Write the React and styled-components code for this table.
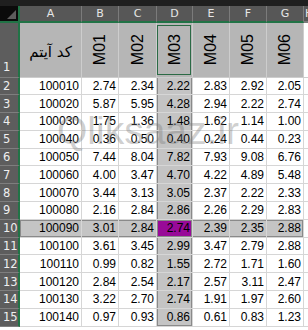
import React from "react";
import styled, { createGlobalStyle } from "styled-components";

const Global = createGlobalStyle`
  html, body { margin: 0; padding: 0; background: #ffffff; overflow: hidden; }
  body { width: 308px; height: 330px; font-family: "Liberation Sans", Arial, sans-serif; }
`;

const COLS = ["A", "B", "C", "D", "E", "F", "G", "H"];
const HEAD = ["کد آیتم", "M01", "M02", "M03", "M04", "M05", "M06"];
const DATA = [
  ["100010", "2.74", "2.34", "2.22", "2.83", "2.92", "2.05"],
  ["100020", "5.87", "5.95", "4.28", "2.94", "2.22", "2.74"],
  ["100030", "1.75", "1.36", "1.48", "1.62", "1.14", "1.00"],
  ["100040", "0.36", "0.50", "0.40", "0.24", "0.44", "0.23"],
  ["100050", "7.44", "8.04", "7.82", "7.93", "9.08", "6.76"],
  ["100060", "4.00", "3.47", "4.70", "4.22", "4.89", "5.48"],
  ["100070", "3.44", "3.13", "3.05", "2.37", "2.22", "2.33"],
  ["100080", "2.16", "2.84", "2.86", "2.26", "2.29", "2.83"],
  ["100090", "3.01", "2.84", "2.74", "2.39", "2.35", "2.88"],
  ["100100", "3.61", "3.45", "2.99", "3.47", "2.79", "2.88"],
  ["100110", "0.99", "0.82", "1.55", "2.72", "1.71", "1.60"],
  ["100120", "2.84", "2.54", "2.17", "2.57", "3.11", "2.47"],
  ["100130", "3.22", "2.70", "2.74", "1.91", "1.97", "2.60"],
  ["100140", "0.97", "0.93", "0.86", "0.61", "0.83", "1.23"],
];

const GREEN = "#217346";
const OUTLINE = "#8a8a8a";

const Window = styled.div`
  position: relative;
  width: 308px;
  height: 330px;
  overflow: hidden;
  background: #ffffff;
`;

const TopStrip = styled.div`
  height: 6px;
  background: #1f1f1f;
`;

const Sheet = styled.div`
  display: grid;
  grid-template-columns: 20px 62px 37px 38px 36px 37px 37px 37px 37px;
  grid-template-rows: 17px 54.5px repeat(15, 17.8px);
`;

const Corner = styled.div`
  background: #0b0b0b;
  border-bottom: 2px solid ${GREEN};
  border-right: 2px solid ${GREEN};
  box-sizing: border-box;
  display: flex;
  align-items: flex-end;
  justify-content: flex-end;
  padding: 0 2px 2px 0;
`;

const ColHead = styled.div`
  box-sizing: border-box;
  background: #575757;
  color: #e6e6e6;
  font-family: "DejaVu Sans", "Liberation Sans", sans-serif;
  font-size: 11px;
  display: flex;
  align-items: center;
  justify-content: ${(p) => (p.$edge ? "flex-start" : "center")};
  padding-left: ${(p) => (p.$edge ? "1px" : "0")};
  border-right: 1px solid #7b7b7b;
  border-bottom: 2px solid ${(p) => (p.$sel ? GREEN : "#7b7b7b")};
  overflow: hidden;
`;

const RowHead = styled.div`
  box-sizing: border-box;
  background: #5d5d5d;
  color: #efefef;
  font-family: "DejaVu Sans", "Liberation Sans", sans-serif;
  font-size: 11.5px;
  display: flex;
  align-items: ${(p) => (p.$tall ? "flex-end" : "center")};
  padding: ${(p) => (p.$tall ? "0 0 3px 3px" : "0 0 0 3px")};
  border-right: 2px solid ${GREEN};
  border-bottom: 1px solid #7e7e7e;
`;

const Cell = styled.div`
  box-sizing: border-box;
  position: relative;
  background: ${(p) => p.$bg};
  border-right: 1px solid #d6d6d6;
  border-bottom: 1px solid #d6d6d6;
  font-size: 12px;
  color: #000;
  display: flex;
  align-items: center;
  justify-content: flex-end;
  padding-right: 2px;
  white-space: nowrap;
  overflow: hidden;
  box-shadow: ${(p) => p.$shadow || "none"};
`;

const HeadCell = styled.div`
  box-sizing: border-box;
  position: relative;
  background: ${(p) => (p.$sel ? "#b6b6b6" : "#ffffff")};
  border-right: 1px solid #cdcdcd;
  border-bottom: 1px solid #cdcdcd;
  display: flex;
  align-items: center;
  justify-content: center;
  overflow: hidden;
`;

const ActiveBox = styled.div`
  position: absolute;
  inset: 2px 1px 2px 0;
  border: 1px solid #2b6a45;
  pointer-events: none;
`;

const Vertical = styled.span`
  writing-mode: vertical-rl;
  transform: rotate(180deg);
  font-family: "Liberation Sans", Arial, sans-serif;
  font-size: 16px;
  color: #000;
  line-height: 1;
`;

const ArabicLabel = styled.span`
  direction: rtl;
  font-family: "DejaVu Sans", "Noto Sans", sans-serif;
  font-size: 15px;
  color: #000;
  margin-top: 4px;
`;

const Watermark = styled.div`
  position: absolute;
  left: 57px;
  top: 109px;
  font-family: "Liberation Sans", Arial, sans-serif;
  font-size: 39px;
  color: rgba(120, 120, 120, 0.36);
  pointer-events: none;
`;

function cellStyle(r, c) {
  const inD = c === 3;
  const inRow10 = r === 8 && c <= 6;
  let bg = "#ffffff";
  if (inD || inRow10) bg = "#c4c4c4";
  if (inD && inRow10) bg = "#980a98";
  const sh = [];
  if (inD) {
    sh.push(`inset 1px 0 0 ${OUTLINE}`, `inset -1px 0 0 ${OUTLINE}`);
    if (r === DATA.length - 1) sh.push(`inset 0 -1px 0 ${OUTLINE}`);
  }
  if (inRow10) {
    sh.push(`inset 0 1px 0 ${OUTLINE}`, `inset 0 -1px 0 ${OUTLINE}`);
    if (c === 0) sh.push(`inset 1px 0 0 ${OUTLINE}`);
    if (c === 6) sh.push(`inset -1px 0 0 ${OUTLINE}`);
  }
  return { bg, shadow: sh.join(", ") };
}

export default function App() {
  return (
    <Window>
      <Global />
      <TopStrip />
      <Sheet>
        <Corner>
          <svg width="9" height="9" viewBox="0 0 9 9">
            <polygon points="9,0 9,9 0,9" fill="#5c5c5c" />
          </svg>
        </Corner>
        {COLS.map((l, i) => (
          <ColHead key={l} $sel={i < 7} $edge={i === 7}>
            {l}
          </ColHead>
        ))}

        <RowHead $tall>1</RowHead>
        {COLS.map((l, i) => (
          <HeadCell key={"h" + l} $sel={i < 7}>
            {i === 0 && <ArabicLabel>{HEAD[0]}</ArabicLabel>}
            {i > 0 && i < 7 && <Vertical>{HEAD[i]}</Vertical>}
            {i === 3 && <ActiveBox />}
          </HeadCell>
        ))}

        {DATA.map((row, r) => (
          <React.Fragment key={r}>
            <RowHead>{r + 2}</RowHead>
            {COLS.map((l, c) => {
              const s = cellStyle(r, c);
              return (
                <Cell key={l + r} $bg={s.bg} $shadow={s.shadow}>
                  {row[c] || ""}
                </Cell>
              );
            })}
          </React.Fragment>
        ))}
      </Sheet>
      <Watermark>Qliksaaz.ir</Watermark>
    </Window>
  );
}
